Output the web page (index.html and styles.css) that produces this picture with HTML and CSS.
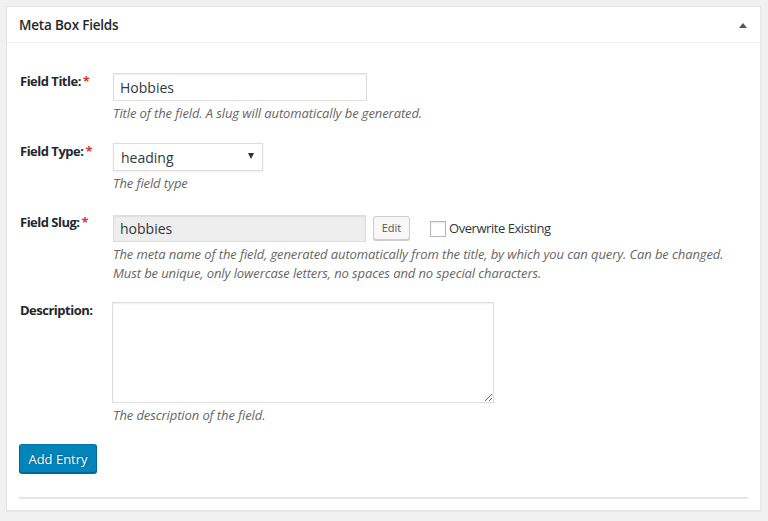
FILE: index.html
```html
<!DOCTYPE html>
<html>
<head>
<meta charset="utf-8">
<link rel="stylesheet" href="styles.css">
</head>
<body>
<div class="postbox">
  <div class="hndle">
    <h2 class="title">Meta Box Fields</h2>
    <span class="toggle"></span>
  </div>
  <div class="inside">
    <div class="row row-title">
      <label class="lbl">Field Title:<span class="req">*</span></label>
      <div class="field">
        <input class="text w254" type="text" value="Hobbies">
        <p class="desc">Title of the field. A slug will automatically be generated.</p>
      </div>
    </div>
    <div class="row row-type">
      <label class="lbl">Field Type:<span class="req">*</span></label>
      <div class="field">
        <div class="select">
          <span class="sel-val">heading</span>
          <span class="sel-arrow"></span>
        </div>
        <p class="desc">The field type</p>
      </div>
    </div>
    <div class="row row-slug">
      <label class="lbl">Field Slug:<span class="req">*</span></label>
      <div class="field">
        <div class="slug-line">
          <input class="text w253 disabled" type="text" value="hobbies" readonly>
          <button class="btn-small">Edit</button>
          <label class="check"><span class="box"></span>Overwrite Existing</label>
        </div>
        <p class="desc">The meta name of the field, generated automatically from the title, by which you can query. Can be changed.<br>Must be unique, only lowercase letters, no spaces and no special characters.</p>
      </div>
    </div>
    <div class="row row-desc">
      <label class="lbl">Description:</label>
      <div class="field">
        <textarea class="area"></textarea>
        <p class="desc">The description of the field.</p>
      </div>
    </div>
    <div class="actions">
      <button class="btn-primary">Add Entry</button>
    </div>
    <hr class="sep">
  </div>
</div>
</body>
</html>
```
FILE: styles.css
```css
* { box-sizing: border-box; }
html, body { margin: 0; padding: 0; }
body {
  background: #f1f1f1;
  font-family: "Open Sans", "Noto Sans", sans-serif;
  color: #444;
  width: 768px;
  height: 521px;
  overflow: hidden;
  padding: 6px 0 0 6px;
}
.postbox {
  width: 755px;
  height: 505px;
  background: #fff;
  border: 1px solid #e5e5e5;
  box-shadow: 0 1px 1px rgba(0,0,0,.04);
}
.hndle {
  height: 36px;
  border-bottom: 1px solid #eee;
  display: flex;
  align-items: center;
  justify-content: space-between;
  padding: 0 13px 0 12px;
}
.title {
  margin: 0;
  font-size: 13.5px;
  font-weight: 600;
  color: #23282d;
  letter-spacing: -0.2px;
}
.toggle {
  width: 0; height: 0;
  border-left: 4px solid transparent;
  border-right: 4px solid transparent;
  border-bottom: 5px solid #555;
  margin-top: 1px;
}
.inside {
  padding: 30px 12px 0 12px;
}
.row {
  display: flex;
  align-items: flex-start;
}
.row-title { margin-bottom: 20px; }
.row-type { margin-bottom: 21px; }
.row-slug { margin-bottom: 19px; }
.row-desc { margin-bottom: 19px; }
.lbl {
  width: 94px;
  flex: none;
  font-size: 13px;
  font-weight: 700;
  line-height: 17px;
  color: #23282d;
  padding-left: 1px;
  letter-spacing: -0.5px;
}
.req { color: #dc3232; margin-left: 2px; }
.field { flex: 1; }
.text {
  display: block;
  height: 28px;
  border: 1px solid #ddd;
  box-shadow: inset 0 1px 2px rgba(0,0,0,.07);
  padding: 2px 6px;
  font-family: inherit;
  font-size: 14px;
  color: #32373c;
  background: #fff;
  outline: none;
  border-radius: 0;
}
.w254 { width: 254px; }
.w253 { width: 253px; height: 27px; }
.disabled { background: #eee; color: #32373c; }
.desc {
  margin: 3px 0 0 0;
  font-size: 13px;
  font-style: italic;
  line-height: 19px;
  color: #666;
  letter-spacing: -0.1px;
}
.select {
  width: 150px;
  height: 28px;
  border: 1px solid #ddd;
  box-shadow: 0 1px 2px rgba(0,0,0,.07);
  display: flex;
  align-items: center;
  justify-content: space-between;
  padding: 0 8px 0 7px;
  font-size: 14px;
  color: #32373c;
}
.sel-arrow {
  width: 0; height: 0;
  border-left: 3.5px solid transparent;
  border-right: 3.5px solid transparent;
  border-top: 6px solid #333;
  margin-bottom: 2px;
}
.slug-line {
  display: flex;
  align-items: center;
  height: 28px;
}
.btn-small {
  margin-left: 7px;
  height: 24px;
  width: 37px;
  padding: 0;
  font-family: inherit;
  font-size: 11px;
  color: #555;
  background: #f7f7f7;
  border: 1px solid #ccc;
  border-radius: 3px;
  box-shadow: 0 1px 0 #ccc;
  line-height: 20px;
}
.check {
  display: flex;
  align-items: center;
  margin-left: 20px;
  font-size: 13px;
  color: #32373c;
  letter-spacing: -0.45px;
}
.box {
  width: 16px; height: 16px;
  border: 1px solid #b4b9be;
  box-shadow: inset 0 1px 2px rgba(0,0,0,.1);
  background: #fff;
  margin-right: 3px;
  margin-top: 1px;
}
.area {
  display: block;
  width: 382px;
  height: 101px;
  margin-left: -1px;
  border: 1px solid #ddd;
  box-shadow: inset 0 1px 2px rgba(0,0,0,.07);
  font-family: inherit;
  outline: none;
  border-radius: 0;
}
.actions { height: 29px; }
.btn-primary {
  height: 29px;
  width: 78px;
  padding: 0;
  background: #0085ba;
  border: 1px solid;
  border-color: #0073aa #006799 #006799;
  border-radius: 3px;
  box-shadow: 0 1px 0 #006799;
  color: #fff;
  font-family: inherit;
  font-size: 13px;
  letter-spacing: 0;
  text-shadow: 0 -1px 1px #006799, 1px 0 1px #006799;
}
.sep {
  margin: 24px 0 0 0;
  border: 0;
  height: 2px;
  background: #e5e5e5;
}
```
